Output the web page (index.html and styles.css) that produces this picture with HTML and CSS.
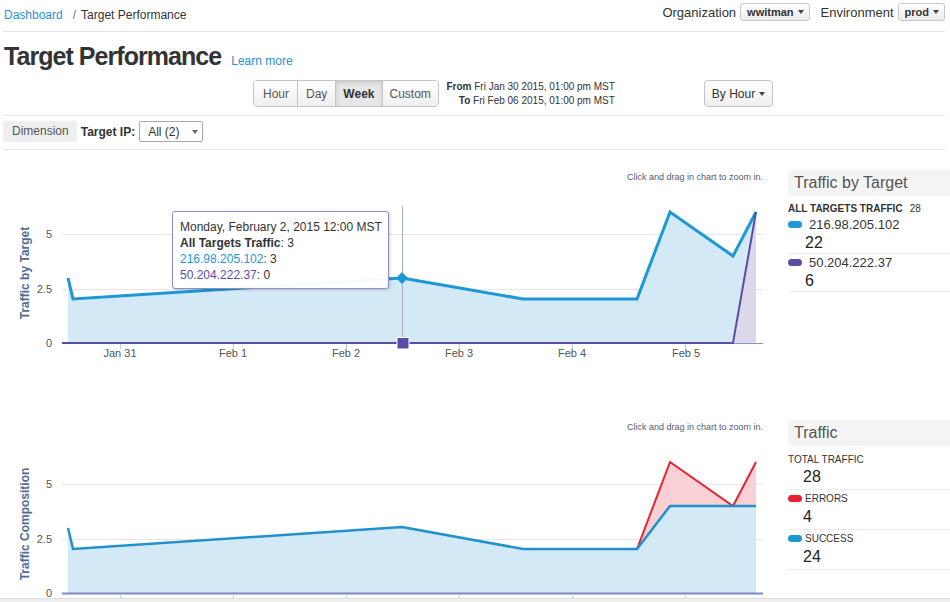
FILE: index.html
```html
<!DOCTYPE html>
<html>
<head>
<meta charset="utf-8">
<title>Target Performance</title>
<link rel="stylesheet" href="styles.css">
</head>
<body>
<header class="topbar">
  <nav class="crumbs"><a class="link">Dashboard</a><span class="sep">/</span><span>Target Performance</span></nav>
  <div class="ctx">
    <span class="ctx-label">Organization</span>
    <button class="mini-btn">wwitman<span class="caret"></span></button>
    <span class="ctx-label env">Environment</span>
    <button class="mini-btn">prod<span class="caret"></span></button>
  </div>
</header>

<div class="title-row">
  <h1>Target Performance</h1>
  <a class="link learn">Learn more</a>
</div>

<div class="controls">
  <div class="btn-group">
    <button class="seg s-hour">Hour</button><button class="seg s-day">Day</button><button class="seg active">Week</button><button class="seg">Custom</button>
  </div>
  <div class="range">
    <div><b>From</b> Fri Jan 30 2015, 01:00 pm MST</div>
    <div><b>To</b> Fri Feb 06 2015, 01:00 pm MST</div>
  </div>
  <button class="btn by-hour">By Hour<span class="caret"></span></button>
</div>

<div class="dims">
  <span class="dim-label">Dimension</span>
  <span class="dim-key">Target IP:</span>
  <span class="select">All (2)<span class="caret gray"></span></span>
</div>

<section class="chart-row">
  <div class="chart-wrap">
    <svg class="chart" width="788" height="250" viewBox="0 0 788 250">
      <text class="hint" x="763" y="30" text-anchor="end">Click and drag in chart to zoom in.</text>
      <line class="grid" x1="62" y1="84.5" x2="763" y2="84.5"/>
      <line class="grid" x1="62" y1="139.5" x2="763" y2="139.5"/>
      <text class="ylab" x="52" y="88" text-anchor="end">5</text>
      <text class="ylab" x="52" y="143" text-anchor="end">2.5</text>
      <text class="ylab" x="52" y="197" text-anchor="end">0</text>
      <text class="ytitle" transform="translate(29,123) rotate(-90)" text-anchor="middle">Traffic by Target</text>
      <path class="area-blue" d="M68 193 L68 128 L73 149 L402 128 L523 149 L637 149 L670 62 L733 106 L756 62 L756 193 Z"/>
      <path class="area-purple" d="M733 193 L756 62 L756 193 Z"/>
      <path class="line-blue" d="M68 128 L73 149 L402 128 L523 149 L637 149 L670 62 L733 106 L756 62"/>
      <line class="crosshair" x1="402.5" y1="56" x2="402.5" y2="193"/>
      <line class="axis" x1="62" y1="193.5" x2="763" y2="193.5"/>
      <g class="ticks">
        <line x1="120.5" y1="194" x2="120.5" y2="199"/>
        <line x1="233.5" y1="194" x2="233.5" y2="199"/>
        <line x1="346.5" y1="194" x2="346.5" y2="199"/>
        <line x1="459.5" y1="194" x2="459.5" y2="199"/>
        <line x1="572.5" y1="194" x2="572.5" y2="199"/>
        <line x1="685.5" y1="194" x2="685.5" y2="199"/>
      </g>
      <path class="line-purple" d="M62 193 L733 193 L756 62"/>
      <path class="mk-blue" d="M402 122 L408 128 L402 134 L396 128 Z"/>
      <rect class="mk-purple" x="397" y="187.5" width="12" height="11.5"/>
      <g class="xlab" text-anchor="middle">
        <text x="120" y="207">Jan 31</text>
        <text x="233" y="207">Feb 1</text>
        <text x="346" y="207">Feb 2</text>
        <text x="459" y="207">Feb 3</text>
        <text x="572" y="207">Feb 4</text>
        <text x="686" y="207">Feb 5</text>
      </g>
    </svg>
    <div class="tooltip">
      <div>Monday, February 2, 2015 12:00 MST</div>
      <div><b>All Targets Traffic</b>: 3</div>
      <div><span class="c-blue">216.98.205.102</span>: 3</div>
      <div><span class="c-purple">50.204.222.37</span>: 0</div>
    </div>
  </div>
  <aside class="legend">
    <div class="legend-head">Traffic by Target</div>
    <div class="legend-sum"><b>ALL TARGETS TRAFFIC</b><span class="sum-val">28</span></div>
    <div class="legend-item">
      <div class="li-label"><span class="pill blue"></span><span class="ip">216.98.205.102</span></div>
      <div class="li-num wide">22</div>
    </div>
    <div class="legend-item">
      <div class="li-label"><span class="pill purple"></span><span class="ip">50.204.222.37</span></div>
      <div class="li-num wide">6</div>
    </div>
  </aside>
</section>

<section class="chart-row short">
  <div class="chart-wrap">
    <svg class="chart" width="788" height="250" viewBox="0 0 788 250">
      <text class="hint" x="763" y="30" text-anchor="end">Click and drag in chart to zoom in.</text>
      <line class="grid" x1="62" y1="84.5" x2="763" y2="84.5"/>
      <line class="grid" x1="62" y1="139.5" x2="763" y2="139.5"/>
      <text class="ylab" x="52" y="88" text-anchor="end">5</text>
      <text class="ylab" x="52" y="143" text-anchor="end">2.5</text>
      <text class="ylab" x="52" y="197" text-anchor="end">0</text>
      <text class="ytitle" transform="translate(29,124) rotate(-90)" text-anchor="middle">Traffic Composition</text>
      <path class="area-blue" d="M68 193 L68 128 L73 149 L402 127 L523 149 L637 149 L670 106 L756 106 L756 193 Z"/>
      <path class="area-red" d="M637 149 L670 62 L733 106 L756 62 L756 106 L670 106 Z"/>
      <path class="line-red" d="M637 149 L670 62 L733 106 L756 62"/>
      <path class="line-blue thin" d="M68 128 L73 149 L402 127 L523 149 L637 149 L670 106 L756 106"/>
      <line class="axis strong" x1="62" y1="193.5" x2="763" y2="193.5"/>
      <g class="ticks">
        <line x1="120.5" y1="194" x2="120.5" y2="199"/>
        <line x1="233.5" y1="194" x2="233.5" y2="199"/>
        <line x1="346.5" y1="194" x2="346.5" y2="199"/>
        <line x1="459.5" y1="194" x2="459.5" y2="199"/>
        <line x1="572.5" y1="194" x2="572.5" y2="199"/>
        <line x1="685.5" y1="194" x2="685.5" y2="199"/>
      </g>
    </svg>
  </div>
  <aside class="legend">
    <div class="legend-head">Traffic</div>
    <div class="legend-item pad first">
      <div class="li-label plain">TOTAL TRAFFIC</div>
      <div class="li-num">28</div>
    </div>
    <div class="legend-item pad">
      <div class="li-label"><span class="pill red"></span><span class="cap">ERRORS</span></div>
      <div class="li-num">4</div>
    </div>
    <div class="legend-item pad">
      <div class="li-label"><span class="pill blue"></span><span class="cap">SUCCESS</span></div>
      <div class="li-num">24</div>
    </div>
  </aside>
</section>
<div class="footer-bar"></div>
</body>
</html>
```

FILE: styles.css
```css
html, body {
  margin: 0;
  padding: 0;
  overflow: hidden;
  background: #fff;
}
body {
  font-family: "Liberation Sans", Arial, Helvetica, sans-serif;
  color: #333;
  font-size: 12px;
  width: 950px;
  height: 602px;
}
button {
  font-family: inherit;
  cursor: pointer;
}
.link {
  color: #2d8fd5;
  text-decoration: none;
}

/* top bar */
.topbar {
  display: flex;
  justify-content: space-between;
  align-items: flex-start;
  height: 31px;
  margin: 0 5px 0 3px;
  border-bottom: 1px solid #e6e6e6;
}
.crumbs {
  margin-top: 7px;
  padding-left: 1px;
  font-size: 12px;
  line-height: 16px;
  color: #333;
}
.crumbs .sep {
  color: #777;
  margin: 0 5px 0 10px;
}
.ctx {
  display: flex;
  align-items: center;
  margin-top: 3px;
  height: 18px;
}
.ctx-label {
  font-size: 13px;
  color: #333;
  margin-right: 4px;
}
.ctx-label.env {
  margin-left: 11px;
}
.mini-btn {
  display: flex;
  align-items: center;
  height: 18px;
  padding: 0 5px 0 6px;
  font-size: 11px;
  font-weight: bold;
  color: #333;
  background: linear-gradient(#ffffff, #ececec);
  border: 1px solid #c8c8c8;
  border-radius: 3px;
}
.caret {
  display: inline-block;
  width: 0;
  height: 0;
  margin-left: 4px;
  border-top: 4px solid #444;
  border-left: 3.5px solid transparent;
  border-right: 3.5px solid transparent;
}
.caret.gray {
  border-top-color: #666;
}

/* title */
.title-row {
  display: flex;
  align-items: baseline;
  padding: 9px 0 0 4px;
  height: 30px;
  line-height: 30px;
}
h1 {
  margin: 0;
  font-size: 25px;
  font-weight: bold;
  letter-spacing: -0.95px;
  color: #333;
}
.learn {
  font-size: 12px;
  margin-left: 10px;
}

/* controls */
.controls {
  display: flex;
  align-items: center;
  margin: 9px 5px 0 3px;
  padding: 0 0 8px 250px;
  height: 27px;
  border-bottom: 1px solid #e6e6e6;
}
.btn-group {
  display: flex;
  height: 27px;
  border: 1px solid #c4c4c4;
  border-radius: 4px;
  overflow: hidden;
  box-sizing: border-box;
}
.seg {
  height: 25px;
  padding: 0 7px;
  border: 0;
  border-left: 1px solid #c4c4c4;
  background: linear-gradient(#ffffff, #efefef);
  color: #555;
  font-size: 12px;
  white-space: nowrap;
}
.seg.s-hour {
  border-left: 0;
  padding: 0 8px 0 9px;
}
.seg.s-day {
  padding: 0 8px;
}
.seg.active {
  background: #e6e6e6;
  box-shadow: inset 0 2px 4px rgba(0,0,0,0.12);
  font-weight: bold;
  color: #333;
}
.range {
  width: 170px;
  margin-left: 6px;
  text-align: right;
  font-size: 10px;
  line-height: 14px;
  color: #333;
  white-space: nowrap;
}
.range b {
  font-weight: bold;
}
.btn {
  display: flex;
  align-items: center;
  height: 27px;
  box-sizing: border-box;
  padding: 0 7px;
  border: 1px solid #c4c4c4;
  border-radius: 4px;
  background: linear-gradient(#ffffff, #efefef);
  font-size: 12px;
  color: #333;
  white-space: nowrap;
}
.by-hour {
  margin-left: 89px;
}

/* dimension row */
.dims {
  display: flex;
  align-items: center;
  margin: 0 5px 0 3px;
  padding: 5px 0 7px 0;
  height: 21px;
  border-bottom: 1px solid #e6e6e6;
}
.dim-label {
  height: 21px;
  line-height: 21px;
  padding: 0 8px 0 9px;
  background: #eeeeee;
  color: #555;
  font-size: 12px;
  border-radius: 2px;
}
.dim-key {
  margin-left: 4px;
  font-weight: bold;
  font-size: 12px;
  color: #333;
}
.select {
  display: flex;
  align-items: center;
  margin-left: 4px;
  width: 64px;
  height: 21px;
  box-sizing: border-box;
  padding-left: 8px;
  border: 1px solid #a9a9a9;
  border-radius: 2px;
  font-size: 12px;
  color: #333;
}
.select .caret {
  margin-left: 12px;
}

/* charts */
.chart-row {
  display: flex;
  height: 250px;
}
.chart-row.short {
  height: 198px;
  overflow: hidden;
}
.chart-wrap {
  position: relative;
  width: 788px;
  height: 250px;
  flex: none;
}
.chart {
  display: block;
}
.hint {
  font-size: 9px;
  fill: #555b70;
}
.grid {
  stroke: #e6e6e6;
  stroke-width: 1;
}
.ylab {
  font-size: 11px;
  fill: #555;
}
.ytitle {
  font-size: 12px;
  font-weight: bold;
  fill: #4d6c98;
}
.xlab text {
  font-size: 11px;
  fill: #555;
}
.area-blue {
  fill: #d3e9f5;
}
.area-purple {
  fill: #dcd8ea;
}
.area-red {
  fill: #f9d1d5;
}
.line-blue {
  fill: none;
  stroke: #1c98d4;
  stroke-width: 3;
  stroke-linejoin: miter;
}
.line-blue.thin {
  stroke: #2290cc;
  stroke-width: 2.5;
}
.line-red {
  fill: none;
  stroke: #e8222f;
  stroke-width: 2;
}
.line-purple {
  fill: none;
  stroke: #5b4da4;
  stroke-width: 2;
}
.crosshair {
  stroke: #a8b0bc;
  stroke-width: 1;
}
.axis {
  stroke: #8a90c8;
  stroke-width: 1;
}
.axis.strong {
  stroke: #7f88c6;
  stroke-width: 2;
}
.ticks line {
  stroke: #c0cce0;
  stroke-width: 1;
}
.mk-blue {
  fill: #1c98d4;
}
.mk-purple {
  fill: #5b4da4;
  stroke: #fff;
  stroke-width: 1;
}
.tooltip {
  position: absolute;
  left: 172px;
  top: 61px;
  width: 200px;
  height: 62px;
  padding: 7px 8px 7px 7px;
  background: rgba(255,255,255,0.96);
  border: 1px solid #8e8cc6;
  border-radius: 3px;
  box-shadow: 1px 1px 3px rgba(0,0,0,0.18);
  font-size: 12px;
  line-height: 16px;
  color: #333;
  white-space: nowrap;
}
.tooltip b {
  font-weight: bold;
}
.c-blue {
  color: #1c98d4;
}
.c-purple {
  color: #5b4da4;
}

/* legends */
.legend {
  width: 162px;
  flex: none;
  padding-top: 20px;
}
.legend-head {
  height: 26px;
  line-height: 26px;
  padding-left: 6px;
  background: #f4f4f4;
  color: #555;
  font-size: 16px;
}
.legend-sum {
  margin-top: 6px;
  height: 14px;
  line-height: 14px;
  font-size: 10px;
  color: #333;
}
.legend-sum b {
  font-weight: bold;
}
.sum-val {
  margin-left: 7px;
}
.legend-item {
  border-bottom: 1px solid #ececec;
}
.legend-item.pad {
  padding-bottom: 2px;
}
.legend-item.first {
  padding-top: 6px;
}
.li-label {
  display: flex;
  align-items: center;
  height: 17px;
  font-size: 13px;
  color: #333;
}
.legend-item.first .li-label {
  height: 15px;
}
.li-label.plain {
  font-size: 10px;
}
.pill {
  display: inline-block;
  width: 14px;
  height: 7px;
  border-radius: 4px;
  flex: none;
}
.pill.blue {
  background: #1c98d4;
}
.pill.purple {
  background: #5b4da4;
}
.pill.red {
  background: #e8222f;
}
.ip {
  margin-left: 7px;
}
.cap {
  margin-left: 3px;
  font-size: 10px;
}
.li-num {
  height: 20px;
  line-height: 20px;
  padding-left: 15px;
  font-size: 16px;
  color: #222;
}
.li-num.wide {
  padding-left: 17px;
}
.footer-bar {
  height: 4px;
  background: #efefef;
  border-top: 1px solid #dedede;
}
```
